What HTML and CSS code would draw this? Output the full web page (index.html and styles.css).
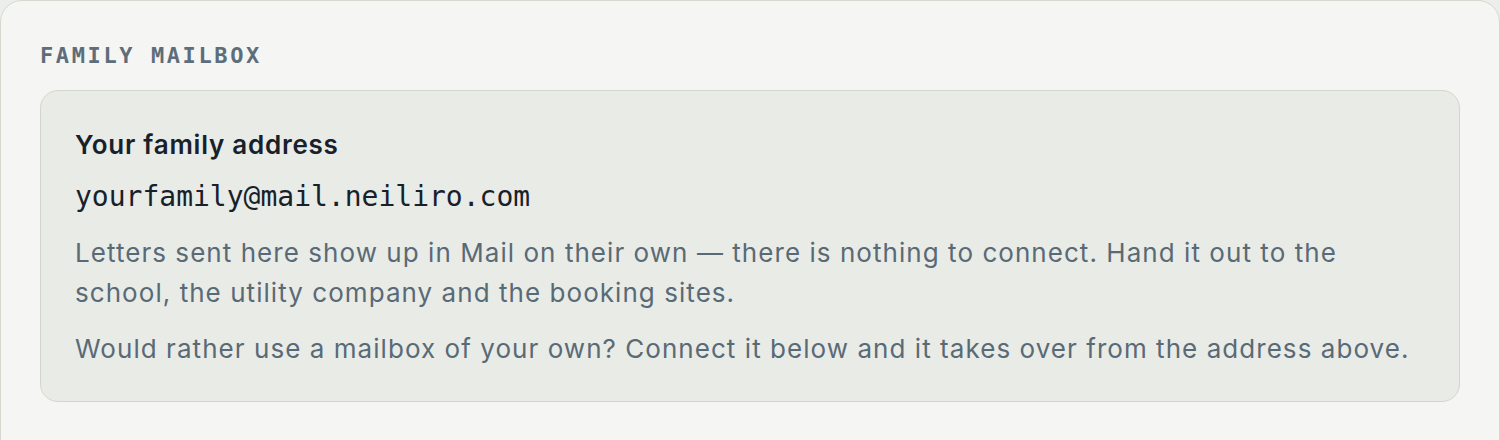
FILE: index.html
```html
<!DOCTYPE html>
<html lang="en">
<head>
<meta charset="utf-8">
<title>Family mailbox</title>
<link rel="stylesheet" href="styles.css">
</head>
<body>
<section class="panel">
  <h2 class="eyebrow">FAMILY MAILBOX</h2>
  <div class="card">
    <h3 class="card-title">Your family address</h3>
    <p class="address">yourfamily@mail.neiliro.com</p>
    <p class="note">Letters sent here show up in Mail on their own — there is nothing to connect. Hand it out to the school, the utility company and the booking sites.</p>
    <p class="note note-last">Would rather use a mailbox of your own? Connect it below and it takes over from the address above.</p>
  </div>
</section>
</body>
</html>
```

FILE: styles.css
```css
html, body {
  margin: 0;
  padding: 0;
}

body {
  background: #eceee9;
  font-family: Inter, "Noto Sans", sans-serif;
  height: 440px;
  overflow: hidden;
}

.panel {
  box-sizing: border-box;
  height: 480px;
  background: #f5f5f3;
  border: 1px solid #d6d8d0;
  border-radius: 22px;
  padding: 42px 39px 0 39px;
}

.eyebrow {
  margin: 0 0 21px 0;
  font-family: "DejaVu Sans Mono", "Liberation Mono", monospace;
  font-size: 22px;
  line-height: 26px;
  font-weight: 700;
  letter-spacing: 2.6px;
  color: #5d6d7a;
}

.card {
  background: #e9ebe6;
  border: 1px solid #d3d6cd;
  border-radius: 18px;
  padding: 36px 34px 32px 34px;
}

.card-title {
  margin: 0 0 15px 0;
  font-size: 26px;
  line-height: 35px;
  font-weight: 600;
  letter-spacing: 0.75px;
  color: #18212b;
}

.address {
  margin: 0 0 17px 0;
  font-family: "DejaVu Sans Mono", "Liberation Mono", monospace;
  font-size: 28px;
  line-height: 39px;
  color: #18212b;
}

.note {
  margin: 0 0 16px 0;
  font-size: 26px;
  line-height: 40px;
  letter-spacing: 1.05px;
  color: #596a77;
}

.note-last {
  margin-bottom: 0;
}
```
